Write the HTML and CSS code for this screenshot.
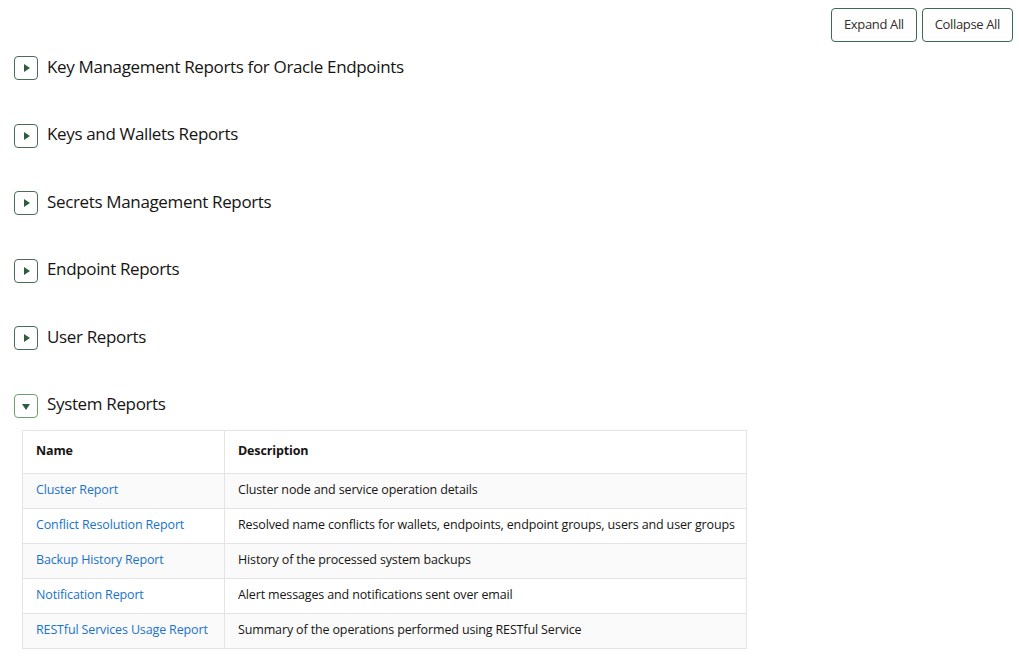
FILE: index.html
```html
<!DOCTYPE html>
<html lang="en">
<head>
    <meta charset="UTF-8">
    <title>Reports</title>
    <link rel="stylesheet" href="styles.css">
</head>
<body>
    <div class="toolbar">
        <button class="btn">Expand All</button>
        <button class="btn">Collapse All</button>
    </div>

    <div class="sections">
        <div class="section-head">
            <span class="toggle"><span class="tri-right"></span></span>
            <h2>Key Management Reports for Oracle Endpoints</h2>
        </div>
        <div class="section-head">
            <span class="toggle"><span class="tri-right"></span></span>
            <h2>Keys and Wallets Reports</h2>
        </div>
        <div class="section-head">
            <span class="toggle"><span class="tri-right"></span></span>
            <h2>Secrets Management Reports</h2>
        </div>
        <div class="section-head">
            <span class="toggle"><span class="tri-right"></span></span>
            <h2>Endpoint Reports</h2>
        </div>
        <div class="section-head">
            <span class="toggle"><span class="tri-right"></span></span>
            <h2>User Reports</h2>
        </div>
        <div class="section-open">
            <div class="section-head">
                <span class="toggle active"><span class="tri-down"></span></span>
                <h2>System Reports</h2>
            </div>
            <table class="report-table">
                <thead>
                    <tr><th class="col-name">Name</th><th>Description</th></tr>
                </thead>
                <tbody>
                    <tr><td><a href="#">Cluster Report</a></td><td>Cluster node and service operation details</td></tr>
                    <tr><td><a href="#">Conflict Resolution Report</a></td><td>Resolved name conflicts for wallets, endpoints, endpoint groups, users and user groups</td></tr>
                    <tr><td><a href="#">Backup History Report</a></td><td>History of the processed system backups</td></tr>
                    <tr><td><a href="#">Notification Report</a></td><td>Alert messages and notifications sent over email</td></tr>
                    <tr><td><a href="#">RESTful Services Usage Report</a></td><td>Summary of the operations performed using RESTful Service</td></tr>
                </tbody>
            </table>
        </div>
    </div>
</body>
</html>
```

FILE: styles.css
```css
body {
    font-family: "Open Sans", "Noto Sans", sans-serif;
    margin: 0;
    padding: 8px 6px 20px 14px;
    background-color: white;
    color: #161513;
}
.toolbar {
    display: flex;
    justify-content: flex-end;
    gap: 5px;
    height: 34px;
}
.btn {
    font-family: inherit;
    font-size: 13px;
    letter-spacing: -0.35px;
    color: #312d2a;
    background-color: white;
    border: 1px solid #3d6b4d;
    border-radius: 4px;
    padding: 0 12px 2px;
    height: 34px;
    cursor: pointer;
}
.sections {
    display: flex;
    flex-direction: column;
    gap: 43.5px;
    margin-top: 14px;
}
.section-head {
    display: flex;
    align-items: center;
    gap: 9px;
    height: 24px;
}
.section-head h2 {
    margin: 0 0 3px 0;
    font-size: 17px;
    font-weight: 400;
    letter-spacing: -0.35px;
    line-height: 24px;
}
.toggle {
    box-sizing: border-box;
    width: 24px;
    height: 24px;
    border: 1px solid #4a6e55;
    border-radius: 4px;
    display: flex;
    align-items: center;
    justify-content: center;
    flex-shrink: 0;
}
.toggle.active {
    border-color: #6fa071;
}
.tri-right {
    width: 0;
    height: 0;
    border-top: 4px solid transparent;
    border-bottom: 4px solid transparent;
    border-left: 6px solid #2c5e3d;
    margin-left: 2px;
}
.tri-down {
    width: 0;
    height: 0;
    border-left: 4.5px solid transparent;
    border-right: 4.5px solid transparent;
    border-top: 6px solid #2c5e3d;
    margin-top: 2px;
}
.report-table {
    margin: 12.5px 0 0 8px;
    border-collapse: collapse;
    width: 725px;
    table-layout: fixed;
    font-size: 12.5px;
    letter-spacing: -0.14px;
}
.report-table th,
.report-table td {
    border: 1px solid #e4e4e4;
    text-align: left;
    padding: 0 0 3px 13px;
    height: 35px;
    box-sizing: border-box;
    white-space: nowrap;
    overflow: hidden;
}
.report-table th {
    font-weight: 700;
    height: 43px;
    padding-bottom: 4px;
}
.col-name {
    width: 202px;
}
.report-table tbody tr:nth-child(odd) {
    background-color: #fafafa;
}
.report-table a {
    color: #1a73c8;
    text-decoration: none;
}
```
